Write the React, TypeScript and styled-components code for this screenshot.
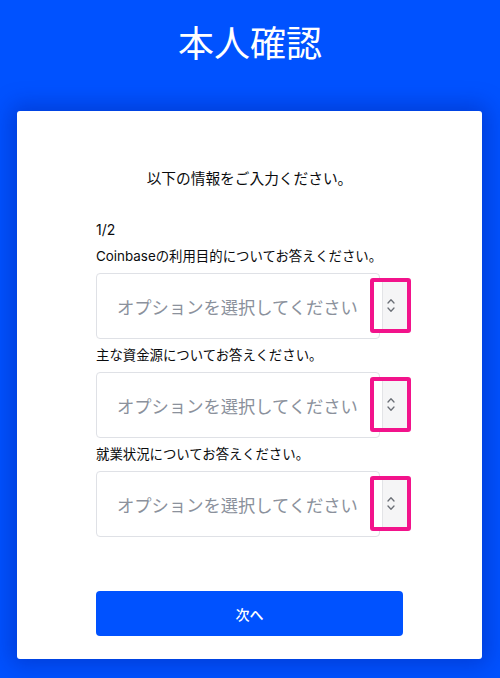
import React from "react";
import styled, { createGlobalStyle } from "styled-components";

const GlobalStyle = createGlobalStyle`
  html, body {
    margin: 0;
    padding: 0;
    background: #0052ff;
  }
  body {
    font-family: "Inter", "Noto Sans CJK JP", sans-serif;
    color: #0a0b0d;
  }
  * { box-sizing: border-box; }
`;

const Page = styled.div`
  width: 500px;
  min-height: 678px;
  background: #0052ff;
  overflow: hidden;
`;

const Header = styled.h1`
  margin: 0;
  padding: 18px 0 47px;
  text-align: center;
  font-family: "Noto Sans CJK JP", sans-serif;
  font-size: 36px;
  line-height: 46px;
  font-weight: 400;
  color: #ffffff;
`;

const Card = styled.div`
  width: 465px;
  margin: 0 0 0 17px;
  background: #ffffff;
  border-radius: 3px;
  padding: 56px 79px 23px;
  box-shadow: 0 0 22px 6px rgba(0, 24, 140, 0.35);
`;

const Intro = styled.p`
  margin: 0 0 31px;
  text-align: center;
  font-family: "Noto Sans CJK JP", sans-serif;
  font-size: 14.7px;
  line-height: 22px;
`;

const Step = styled.div`
  font-size: 14px;
  line-height: 20px;
`;

const Label = styled.div`
  margin: 7px 0 8px;
  font-family: "Inter", "Noto Sans CJK JP", sans-serif;
  font-size: 13.4px;
  line-height: 18px;
  white-space: nowrap;
`;

const Field = styled.div`
  position: relative;
  width: 284px;
  height: 66px;
`;

const SelectBox = styled.div`
  height: 100%;
  display: flex;
  align-items: center;
  padding-left: 20px;
  border: 1px solid #dfe1e6;
  border-radius: 4px;
  background: #ffffff;
  font-family: "Noto Sans CJK JP", sans-serif;
  font-size: 17.3px;
  color: #8b919c;
  white-space: nowrap;
`;

const Highlight = styled.div`
  position: absolute;
  left: 274px;
  top: 5px;
  bottom: 6px;
  width: 41px;
  border: 4px solid #f2138b;
  border-radius: 3px;
  background: #ffffff;
  display: flex;
  padding-left: 8px;
`;

const ArrowArea = styled.div`
  flex: 1;
  display: flex;
  align-items: center;
  justify-content: flex-start;
  padding-left: 4px;
  border-left: 1px solid #e3e4e7;
  background: #f5f5f6;
`;

const NextButton = styled.button`
  display: block;
  width: 307px;
  height: 45px;
  margin-top: 54px;
  border: none;
  border-radius: 4px;
  background: #0052ff;
  color: #ffffff;
  font-family: "Noto Sans CJK JP", sans-serif;
  font-size: 14px;
  font-weight: 500;
  cursor: pointer;
`;

const Chevrons = () => (
  <svg width="8" height="15" viewBox="0 0 8 15" fill="none">
    <path d="M1 5 L4 1.8 L7 5" stroke="#6b6f76" strokeWidth="1.3" strokeLinecap="round" strokeLinejoin="round" />
    <path d="M1 10 L4 13.2 L7 10" stroke="#6b6f76" strokeWidth="1.3" strokeLinecap="round" strokeLinejoin="round" />
  </svg>
);

const questions = [
  "Coinbaseの利用目的についてお答えください。",
  "主な資金源についてお答えください。",
  "就業状況についてお答えください。",
];

export default function App() {
  return (
    <Page>
      <GlobalStyle />
      <Header>本人確認</Header>
      <Card>
        <Intro>以下の情報をご入力ください。</Intro>
        <Step>1/2</Step>
        {questions.map((q) => (
          <React.Fragment key={q}>
            <Label>{q}</Label>
            <Field>
              <SelectBox>オプションを選択してください</SelectBox>
              <Highlight>
                <ArrowArea>
                  <Chevrons />
                </ArrowArea>
              </Highlight>
            </Field>
          </React.Fragment>
        ))}
        <NextButton>次へ</NextButton>
      </Card>
    </Page>
  );
}
